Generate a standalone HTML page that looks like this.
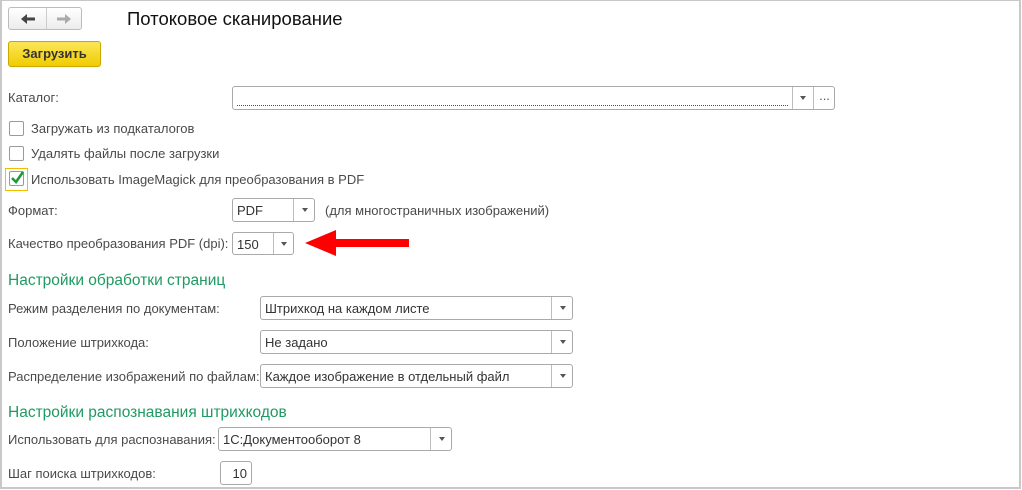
<!DOCTYPE html>
<html><head><meta charset="utf-8"><style>
*{box-sizing:border-box;margin:0;padding:0}
body{width:1022px;height:490px;background:#fff;font-family:"Liberation Sans",Arial,sans-serif;font-size:13px;color:#4a4a4a;position:relative;overflow:hidden}
.frame{position:absolute;left:0;top:0;width:1021px;height:489px;border:2px solid #c8c8c8;border-top:1px solid #c8c8c8}
.a{position:absolute;white-space:nowrap}
.box{position:absolute;border:1px solid #a9a9a9;border-radius:3px;background:#fff}
.btn{position:absolute;top:0;bottom:0;border-left:1px solid #bdbdbd}
.tri{position:absolute;left:50%;top:50%;margin:-2px 0 0 -3px;border-left:3px solid transparent;border-right:3px solid transparent;border-top:4px solid #555}
.val{position:absolute;left:4px;top:4px;color:#333;font-size:13px}
.cb{position:absolute;width:15px;height:15px;border:1px solid #9a9a9a;border-radius:2px;background:#fff}
h2{position:absolute;font-weight:normal;font-size:15.5px;color:#1f9a62;white-space:nowrap}
</style></head><body>
<div class="frame"></div>
<div class="box" style="left:8px;top:7px;width:74px;height:23px;background:linear-gradient(#fff,#ececec);border-color:#bcbcbc">
 <div style="position:absolute;left:37px;top:0;bottom:0;border-left:1px solid #ccc"></div>
 <svg style="position:absolute;left:11px;top:5px" width="16" height="12"><path d="M1 6 L7 1 V4.5 H15 V7.5 H7 V11 Z" fill="#444"/></svg>
 <svg style="position:absolute;left:47px;top:5px" width="16" height="12"><path d="M15 6 L9 1 V4.5 H1 V7.5 H9 V11 Z" fill="#aaa"/></svg>
</div>
<div class="a" style="left:127px;top:8px;font-size:18.5px;color:#111">Потоковое сканирование</div>
<div class="a" style="left:8px;top:41px;width:93px;height:26px;border:1px solid #c9a800;border-radius:3px;background:linear-gradient(#fbe65a,#f0cc00);color:#333;font-weight:bold;font-size:13px;text-align:center;line-height:24px">Загрузить</div>

<div class="a" style="left:8px;top:90px">Каталог:</div>
<div class="box" style="left:232px;top:86px;width:603px;height:24px">
 <div style="position:absolute;left:4px;width:551px;top:18px;height:1px;background:repeating-linear-gradient(90deg,#f00 0 1px,transparent 1px 2px)"></div>
 <div class="btn" style="left:559px;width:21px"><div class="tri"></div></div>
 <div class="btn" style="left:580px;width:22px;text-align:center;line-height:18px;color:#555">...</div>
</div>

<div class="cb" style="left:9px;top:121px"></div><div class="a" style="left:31px;top:121px">Загружать из подкаталогов</div>
<div class="cb" style="left:9px;top:146px"></div><div class="a" style="left:31px;top:146px">Удалять файлы после загрузки</div>
<div class="a" style="left:5px;top:168px;width:23px;height:23px;border:1px solid #f0c000"></div>
<div class="cb" style="left:9px;top:171px"><svg width="14" height="14" style="position:absolute;left:0;top:-1px"><path d="M2 7 L6 11 L13 1" stroke="#1e9a3a" stroke-width="2.6" fill="none"/></svg></div>
<div class="a" style="left:31px;top:172px">Использовать ImageMagick для преобразования в PDF</div>

<div class="a" style="left:8px;top:203px">Формат:</div>
<div class="box" style="left:232px;top:198px;width:83px;height:24px"><span class="val">PDF</span><div class="btn" style="left:60px;width:22px"><div class="tri"></div></div></div>
<div class="a" style="left:325px;top:203px">(для многостраничных изображений)</div>

<div class="a" style="left:8px;top:236px">Качество преобразования PDF (dpi):</div>
<div class="box" style="left:232px;top:232px;width:62px;height:23px"><span class="val">150</span><div class="btn" style="left:40px;width:21px"><div class="tri"></div></div></div>
<svg class="a" style="left:303px;top:229px" width="108" height="28"><path d="M2 14 L33 1 V10 H106 V18 H33 V27 Z" fill="#f00"/></svg>

<h2 style="left:8px;top:272px">Настройки обработки страниц</h2>
<div class="a" style="left:8px;top:301px">Режим разделения по документам:</div>
<div class="box" style="left:260px;top:296px;width:313px;height:24px"><span class="val">Штрихкод на каждом листе</span><div class="btn" style="left:290px;width:22px"><div class="tri"></div></div></div>
<div class="a" style="left:8px;top:335px">Положение штрихкода:</div>
<div class="box" style="left:260px;top:330px;width:313px;height:24px"><span class="val">Не задано</span><div class="btn" style="left:290px;width:22px"><div class="tri"></div></div></div>
<div class="a" style="left:8px;top:369px">Распределение изображений по файлам:</div>
<div class="box" style="left:260px;top:364px;width:313px;height:24px"><span class="val">Каждое изображение в отдельный файл</span><div class="btn" style="left:290px;width:22px"><div class="tri"></div></div></div>

<h2 style="left:8px;top:404px">Настройки распознавания штрихкодов</h2>
<div class="a" style="left:8px;top:432px">Использовать для распознавания:</div>
<div class="box" style="left:218px;top:427px;width:234px;height:24px"><span class="val">1С:Документооборот 8</span><div class="btn" style="left:211px;width:22px"><div class="tri"></div></div></div>
<div class="a" style="left:8px;top:466px">Шаг поиска штрихкодов:</div>
<div class="box" style="left:220px;top:461px;width:32px;height:24px"><span class="val" style="left:auto;right:4px">10</span></div>
</body></html>
